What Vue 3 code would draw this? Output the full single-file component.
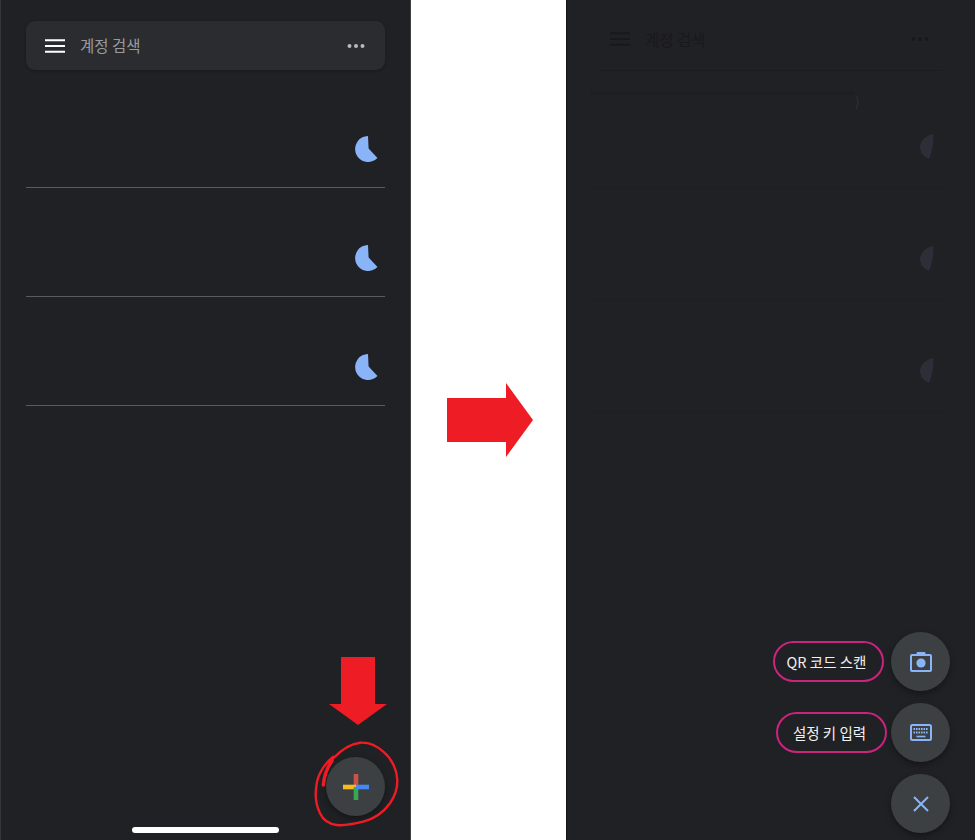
<script setup>
const rows = [0, 1, 2]
</script>

<template>
  <div class="page">
    <section class="phone left">
      <div class="search">
        <svg class="menu" viewBox="0 0 20 14" width="20" height="14"><path d="M0 1.2H20M0 7H20M0 12.8H20" stroke="#fff" stroke-width="2" /></svg>
        <span class="search-text">계정 검색</span>
        <svg class="more" viewBox="0 0 18 6" width="18" height="6"><circle cx="2.5" cy="3" r="2" /><circle cx="9" cy="3" r="2" /><circle cx="15.5" cy="3" r="2" /></svg>
      </div>
      <div class="rows">
        <div v-for="r in rows" :key="r" class="row">
          <svg class="timer" viewBox="0 0 26 26" width="26" height="26"><path d="M13 0A13 13 0 1 0 22.5 22L13.6 12.4Z" fill="#8ab4f8" /></svg>
        </div>
      </div>
      <div class="home"></div>
      <svg class="down" viewBox="0 0 58 70" width="58" height="70"><path d="M12 0H46V47H58L29 68 0 47H12Z" fill="#ee1c25" /></svg>
      <div class="fab plus-fab">
        <svg viewBox="0 0 26 26" width="26" height="26">
          <path d="M13 0V13" stroke="#c9524a" stroke-width="4.6" />
          <path d="M0 13H13" stroke="#f5bb1d" stroke-width="4.6" />
          <path d="M13 13V26" stroke="#36a852" stroke-width="4.6" />
          <path d="M13 13H26" stroke="#4688f1" stroke-width="4.6" />
        </svg>
      </div>
      <svg class="scribble" viewBox="0 0 86 90" width="86" height="90">
        <path d="M9.3 46C11 34 14 26 19.3 19.3C27 11 36 5 46 3.7C55 3 63 7 69.3 12.7C78 20 83 31 83.3 41C83.5 49 81 57 76 64.3C69 74 60 80 49.3 82.7C40 85 31 87 22.7 86C15 85 9 81 6 74.3C3 68 1.5 61 1.7 54.3C2 47 3 40 6 34.3C9 28 14 22 19.3 17.7" fill="none" stroke="#ee1c25" stroke-width="2.4" stroke-linecap="round" />
        <path d="M9.3 46C10 38 12 30 18 22" fill="none" stroke="#ee1c25" stroke-width="3.4" stroke-linecap="round" />
      </svg>
    </section>

    <div class="middle">
      <svg viewBox="0 0 86 74" width="86" height="74"><path d="M0 15H59V0L86 37 59 74V59H0Z" fill="#ee1c25" /></svg>
    </div>

    <section class="phone right">
      <div class="ghost-search">
        <svg class="menu" viewBox="0 0 20 14" width="20" height="14"><path d="M0 1.2H20M0 7H20M0 12.8H20" stroke="#19191b" stroke-width="2" /></svg>
        <span class="ghost-text">계정 검색</span>
        <svg class="more" viewBox="0 0 18 6" width="18" height="6"><circle cx="2.5" cy="3" r="2" fill="#19191b" /><circle cx="9" cy="3" r="2" fill="#19191b" /><circle cx="15.5" cy="3" r="2" fill="#19191b" /></svg>
      </div>
      <div class="ghost-line"></div>
      <div class="ghost-rows">
        <div v-for="r in rows" :key="r" class="ghost-row">
          <div v-if="r === 0" class="note">
            <div class="note-strip"></div>
            <svg class="note-paren" viewBox="0 0 4 16" width="4" height="16"><path d="M1 1C3.5 5 3.5 11 1 15" fill="none" stroke="#2c2d33" stroke-width="1.4" /></svg>
          </div>
          <svg viewBox="0 0 14 25" width="14" height="25"><path d="M13 0C4 2 0 8 0 13C0 18 4 23 9 25C12 19 14 8 13 0Z" fill="#2c2f37" /></svg>
        </div>
      </div>
      <div class="actions">
        <div class="action">
          <span class="pill pill-qr">QR 코드 스캔</span>
          <div class="fab">
            <svg viewBox="0 0 22 20" width="22" height="20"><path d="M6 3L7 0H15L16 3Z" fill="#8ab4f8" /><rect x="1" y="3" width="20" height="16" rx="1" fill="none" stroke="#8ab4f8" stroke-width="2" /><circle cx="11" cy="11" r="4.6" fill="#8ab4f8" /></svg>
          </div>
        </div>
        <div class="action">
          <span class="pill pill-key">설정 키 입력</span>
          <div class="fab">
            <svg viewBox="0 0 22 17" width="22" height="17"><rect x="1" y="1" width="20" height="15" rx="1.5" fill="none" stroke="#8ab4f8" stroke-width="2" /><path d="M3.5 5H18.5M3.5 8.5H18.5" stroke="#8ab4f8" stroke-width="2.2" stroke-dasharray="1.6 0.9" /><path d="M6.5 12.5H15.5" stroke="#8ab4f8" stroke-width="1.6" /></svg>
          </div>
        </div>
        <div class="action">
          <div class="fab">
            <svg viewBox="0 0 16 16" width="16" height="16"><path d="M1 1L15 15M15 1L1 15" stroke="#8ab4f8" stroke-width="2" /></svg>
          </div>
        </div>
      </div>
    </section>
  </div>
</template>

<style>
html, body { margin: 0; background: #fff; }
</style>

<style scoped>
.page {
  width: 980px;
  height: 840px;
  display: flex;
  background: #fff;
  overflow: hidden;
  font-family: "Noto Sans CJK KR", "Noto Sans", sans-serif;
}
.phone {
  position: relative;
  height: 840px;
  background: #202124;
  box-sizing: border-box;
  flex: none;
}
.left {
  width: 411px;
  padding: 21px 25px 0 25px;
  border-left: 1px solid #34353a;
  border-right: 1px solid #3f4044;
}
.middle {
  width: 155px;
  flex: none;
  display: flex;
  align-items: center;
  justify-content: center;
  padding-left: 2px;
  box-sizing: border-box;
  height: 840px;
}
.right {
  width: 409px;
  padding: 31px 30px 0 23px;
  border-left: 1px solid #141416;
}
.search {
  height: 49px;
  background: #2b2c30;
  border-radius: 9px;
  display: flex;
  align-items: center;
  padding: 0 20px 0 19px;
  box-shadow: 0 1px 3px rgba(0, 0, 0, 0.25);
}
.search-text {
  margin-left: 15px;
  padding-bottom: 2px;
  font-size: 15.5px;
  color: #9a9b9e;
  flex: 1;
}
.more { fill: #b9babd; }
.rows { margin-top: 9px; }
.row {
  box-sizing: border-box;
  height: 109px;
  border-bottom: 1px solid #5a5b5f;
  display: flex;
  justify-content: flex-end;
  align-items: flex-end;
  padding: 0 4px 25px 0;
}
.timer { display: block; }
.home {
  position: absolute;
  left: 131px;
  bottom: 7px;
  width: 147px;
  height: 6px;
  border-radius: 3px;
  background: #fff;
}
.down {
  position: absolute;
  left: 328px;
  top: 657px;
}
.fab {
  width: 59px;
  height: 59px;
  border-radius: 50%;
  background: #3c4043;
  display: flex;
  align-items: center;
  justify-content: center;
  box-shadow: 0 3px 6px rgba(0, 0, 0, 0.35);
  flex: none;
}
.plus-fab {
  position: absolute;
  left: 325px;
  top: 757px;
}
.scribble {
  position: absolute;
  left: 313px;
  top: 739px;
}
.ghost-search {
  display: flex;
  align-items: center;
  height: 16px;
  margin: 0 16px 0 20px;
}
.ghost-text {
  margin-left: 15px;
  font-size: 15.5px;
  color: #19191b;
  flex: 1;
}
.ghost-line {
  height: 1px;
  margin: 23px 2px 0 8px;
  background: #1b1c1e;
}
.ghost-row {
  box-sizing: border-box;
  height: 112px;
  display: flex;
  flex-direction: column;
  align-items: flex-end;
  justify-content: flex-end;
  padding: 0 11px 28px 0;
  border-bottom: 1px solid #1d1e20;
}
.ghost-row:first-child { height: 117px; }
.note {
  align-self: stretch;
  margin: 21px 0 auto;
  display: flex;
  align-items: flex-start;
}
.note-strip {
  width: 265px;
  height: 3px;
  background: #1d1e21;
}
.note-paren { margin-top: 2px; }
.actions {
  position: absolute;
  right: 25px;
  bottom: 7px;
  display: flex;
  flex-direction: column;
  align-items: flex-end;
  gap: 12px;
}
.action {
  display: flex;
  align-items: center;
}
.pill {
  display: flex;
  align-items: center;
  justify-content: center;
  box-sizing: border-box;
  height: 41px;
  padding-right: 4px;
  border: 2px solid #c9247f;
  border-radius: 21px;
  color: #f1f1f1;
  font-size: 14.5px;
  font-weight: 400;
}
.pill-qr { width: 111px; margin-right: 7px; }
.pill-key { width: 111px; margin-right: 4px; }
</style>
